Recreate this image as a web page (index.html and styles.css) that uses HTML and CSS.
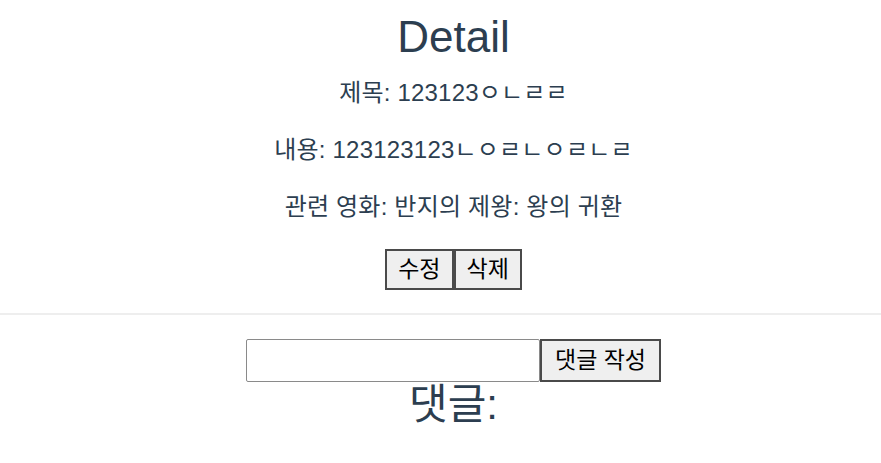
FILE: index.html
```html
<!DOCTYPE html>
<html lang="ko">
<head>
<meta charset="utf-8">
<title>Detail</title>
<link rel="stylesheet" href="styles.css">
</head>
<body>
<div class="app">
  <section class="detail">
    <h1 class="title">Detail</h1>
    <p class="field">제목: 123123ㅇㄴㄹㄹ</p>
    <p class="field">내용: 123123123ㄴㅇㄹㄴㅇㄹㄴㄹ</p>
    <p class="field">관련 영화: 반지의 제왕: 왕의 귀환</p>
    <div class="actions">
      <button class="btn">수정</button><button class="btn">삭제</button>
    </div>
  </section>
  <hr class="divider">
  <section class="comments">
    <form class="comment-form">
      <input class="comment-input" type="text"><button class="btn btn-submit" type="button">댓글 작성</button>
    </form>
    <h2 class="comments-title">댓글:</h2>
  </section>
</div>
</body>
</html>
```
FILE: styles.css
```css
html, body {
  margin: 0;
  padding: 0;
  background: #fff;
}
.app {
  font-family: "Liberation Sans", Arial, "Noto Sans CJK KR", sans-serif;
  color: #2c3e50;
  text-align: center;
}
.detail, .comments {
  padding-left: 26px;
}
.detail {
  padding-top: 12px;
}
.title {
  margin: 0;
  font-size: 44px;
  font-weight: normal;
  line-height: 50px;
}
.field {
  margin: 14px 0 0;
  font-size: 24px;
  line-height: 33px;
  letter-spacing: 0.2px;
}
.field + .field {
  margin-top: 24px;
}
.actions {
  margin-top: 26px;
  display: flex;
  justify-content: center;
}
.btn {
  font-family: "Liberation Sans", Arial, "Noto Sans CJK KR", sans-serif;
  font-size: 23px;
  color: #000;
  background: #efefef;
  border: 2px solid #4a4a4a;
  height: 41px;
  padding: 0 11px;
  margin: 0;
  line-height: 1;
}
.divider {
  margin: 23px 0 0;
  border: 0;
  height: 2px;
  background: #eeeeee;
}
.comment-form {
  margin: 24px 0 0;
  display: flex;
  justify-content: center;
}
.comment-input {
  box-sizing: border-box;
  width: 294px;
  height: 43px;
  border: 1px solid #8a8a8a;
  border-radius: 2px;
  margin: 0;
  padding: 0 4px;
  font-size: 24px;
}
.btn-submit {
  height: 43px;
  padding: 0 13px;
}
.comments-title {
  margin: 0;
  font-size: 42px;
  font-weight: normal;
  line-height: 46px;
}
```
